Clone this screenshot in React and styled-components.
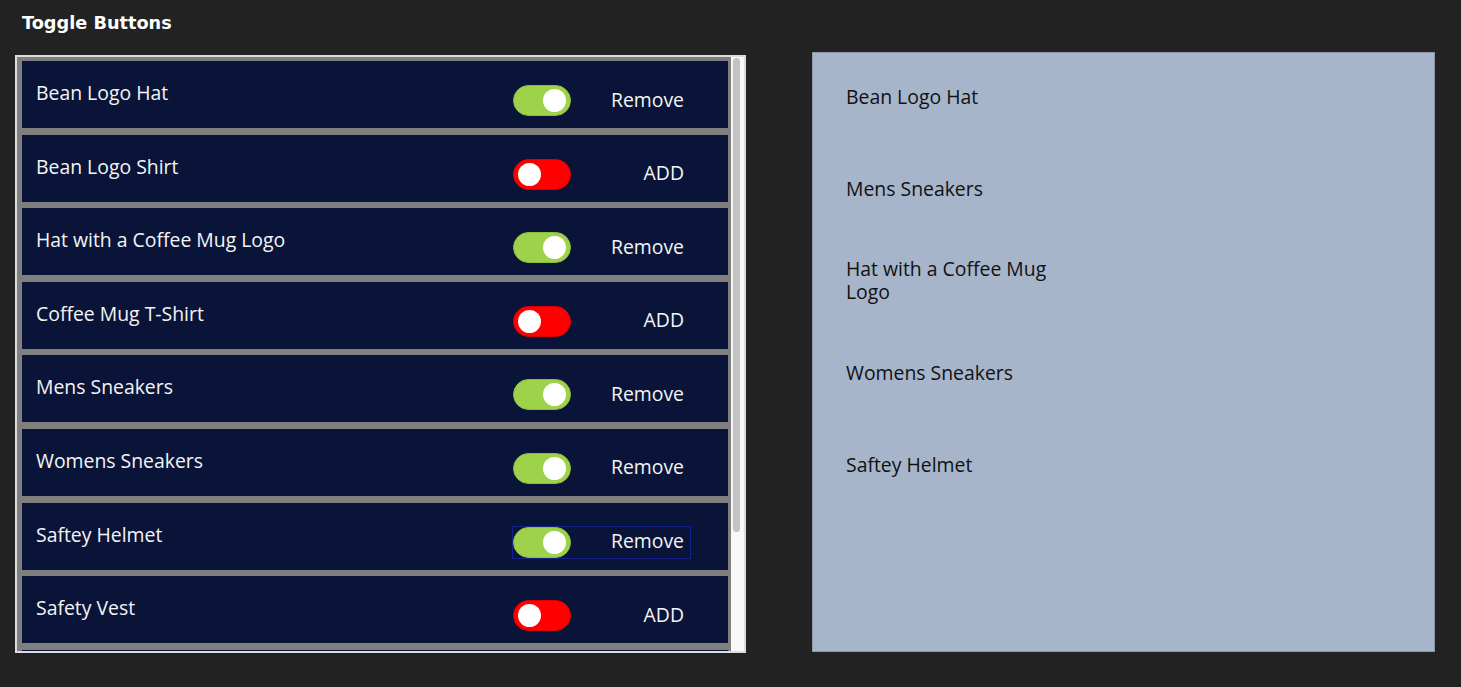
import React from "react";
import styled, { createGlobalStyle } from "styled-components";

const GlobalStyle = createGlobalStyle`
  html, body { margin: 0; padding: 0; background: #222222; }
  body { font-family: "Open Sans", "Noto Sans", sans-serif; }
  * { box-sizing: border-box; }
`;

const Page = styled.div`
  width: 1461px;
  height: 687px;
  background: #222222;
  padding: 12px 0 0 15px;
`;

const Title = styled.h1`
  margin: 0 0 0 7px;
  font-family: "DejaVu Sans", "Open Sans", sans-serif;
  font-size: 17.7px;
  line-height: 23px;
  font-weight: 700;
  color: #ffffff;
`;

const Main = styled.div`
  display: flex;
  align-items: flex-start;
  gap: 66px;
  margin-top: 17px;
`;

const Gallery = styled.div`
  width: 731px;
  height: 598px;
  margin-top: 3px;
  border: 2px solid #dcdcdc;
  background: #7f7f7f;
  display: flex;
`;

const ListArea = styled.div`
  flex: 1;
  overflow: hidden;
  padding: 4px 3px 0 5px;
`;

const ScrollTrack = styled.div`
  width: 13px;
  flex-shrink: 0;
  background: #f8f8f8;
  padding: 1px 4px 0 2px;
`;

const Thumb = styled.div`
  height: 474px;
  border-radius: 4px;
  background: #c3c3c3;
`;

const List = styled.div`
  display: flex;
  flex-direction: column;
  gap: 6.6px;
`;

const Row = styled.div`
  height: 67px;
  flex-shrink: 0;
  background: #0a1439;
  display: flex;
  align-items: flex-start;
  justify-content: space-between;
  padding: 20px 37px 0 14px;
`;

const ItemName = styled.div`
  font-size: 19.4px;
  line-height: 24px;
  color: #f4f4f4;
`;

const ToggleControl = styled.div`
  width: 179px;
  height: 33px;
  margin-top: 3px;
  display: flex;
  align-items: center;
  justify-content: space-between;
  padding: 0 6px 2px 0;
  border: 1px solid ${(p) => (p.$focused ? "#14228a" : "transparent")};
`;

const Track = styled.div`
  width: 58px;
  height: 31px;
  margin-top: 2px;
  border-radius: 16px;
  background: ${(p) => (p.$on ? "#9dd24a" : "#ff0000")};
  border: 1px solid ${(p) => (p.$on ? "#8cbf3e" : "#e00000")};
  display: flex;
  align-items: center;
  justify-content: ${(p) => (p.$on ? "flex-end" : "flex-start")};
  padding: 0 4px;
`;

const Knob = styled.div`
  width: 23px;
  height: 23px;
  border-radius: 50%;
  background: #ffffff;
`;

const ToggleLabel = styled.span`
  font-size: 19.4px;
  line-height: 24px;
  color: #f4f4f4;
`;

const Panel = styled.div`
  width: 623px;
  height: 600px;
  background: #a7b5cb;
  border: 1px solid #8c96a6;
  padding: 0 0 0 33px;
`;

const PanelItem = styled.div`
  width: 225px;
  height: 92px;
  display: flex;
  align-items: center;
  padding-bottom: 6px;
  font-size: 19.4px;
  line-height: 23px;
  color: #111111;
`;

const items = [
  { name: "Bean Logo Hat", on: true },
  { name: "Bean Logo Shirt", on: false },
  { name: "Hat with a Coffee Mug Logo", on: true },
  { name: "Coffee Mug T-Shirt", on: false },
  { name: "Mens Sneakers", on: true },
  { name: "Womens Sneakers", on: true },
  { name: "Saftey Helmet", on: true, focused: true },
  { name: "Safety Vest", on: false },
];

const chosen = [
  "Bean Logo Hat",
  "Mens Sneakers",
  "Hat with a Coffee Mug Logo",
  "Womens Sneakers",
  "Saftey Helmet",
];

export default function App() {
  return (
    <>
      <GlobalStyle />
      <Page>
        <Title>Toggle Buttons</Title>
        <Main>
          <Gallery>
            <ListArea>
              <List>
                {items.map((it) => (
                  <Row key={it.name}>
                    <ItemName>{it.name}</ItemName>
                    <ToggleControl $focused={it.focused}>
                      <Track $on={it.on}>
                        <Knob />
                      </Track>
                      <ToggleLabel>{it.on ? "Remove" : "ADD"}</ToggleLabel>
                    </ToggleControl>
                  </Row>
                ))}
                <Row />
              </List>
            </ListArea>
            <ScrollTrack>
              <Thumb />
            </ScrollTrack>
          </Gallery>
          <Panel>
            {chosen.map((name) => (
              <PanelItem key={name}>{name}</PanelItem>
            ))}
          </Panel>
        </Main>
      </Page>
    </>
  );
}
